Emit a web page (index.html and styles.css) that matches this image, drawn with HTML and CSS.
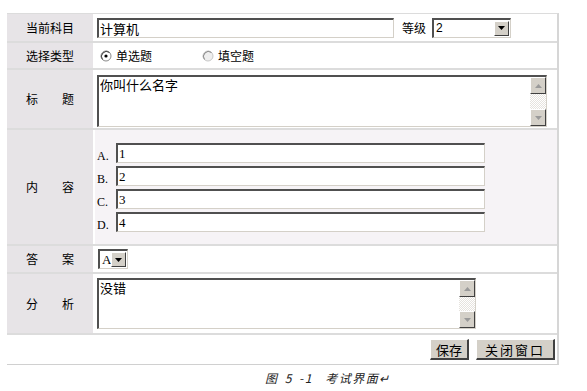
FILE: index.html
```html
<!DOCTYPE html>
<html lang="zh-CN">
<head>
<meta charset="utf-8">
<title>考试界面</title>
<link rel="stylesheet" href="styles.css">
</head>
<body>
<div class="form">
  <div class="row r1">
    <div class="label">当前科目</div>
    <div class="cell">
      <div class="field subject">计算机</div>
      <span class="level-label">等级</span>
      <div class="select level"><span class="sel-text">2</span><span class="drop"><svg width="7" height="4" viewBox="0 0 7 4"><path d="M0 0H7L3.5 4Z" fill="#000"/></svg></span></div>
    </div>
  </div>
  <div class="row r2">
    <div class="label">选择类型</div>
    <div class="cell">
      <span class="radio"><svg width="12" height="12" viewBox="0 0 12 12"><circle cx="6" cy="6" r="5" fill="#fff" stroke="#8a8a8a"/><path d="M2.5 9.5A5 5 0 0 1 9.5 2.5" fill="none" stroke="#404040"/><circle cx="6" cy="6" r="1.6" fill="#000"/></svg>单选题</span>
      <span class="radio second"><svg width="12" height="12" viewBox="0 0 12 12"><circle cx="6" cy="6" r="5" fill="#eee" stroke="#c8c8c8"/><path d="M2.5 9.5A5 5 0 0 1 9.5 2.5" fill="none" stroke="#888"/></svg>填空题</span>
    </div>
  </div>
  <div class="row r3">
    <div class="label">标　　题</div>
    <div class="cell top">
      <div class="area title-area">
        <div class="area-text">你叫什么名字</div>
        <div class="scroll">
          <span class="sbtn"><svg width="7" height="4" viewBox="0 0 7 4"><path d="M0 4H7L3.5 0Z" fill="#9a9a9a"/></svg></span>
          <span class="track"></span>
          <span class="sbtn"><svg width="7" height="4" viewBox="0 0 7 4"><path d="M0 0H7L3.5 4Z" fill="#9a9a9a"/></svg></span>
        </div>
      </div>
    </div>
  </div>
  <div class="row r4">
    <div class="label">内　　容</div>
    <div class="cell options">
      <div class="opt"><span class="letter">A.</span><div class="field choice">1</div></div>
      <div class="opt"><span class="letter">B.</span><div class="field choice">2</div></div>
      <div class="opt"><span class="letter">C.</span><div class="field choice">3</div></div>
      <div class="opt"><span class="letter">D.</span><div class="field choice">4</div></div>
    </div>
  </div>
  <div class="row r5">
    <div class="label">答　　案</div>
    <div class="cell">
      <div class="select answer"><span class="sel-text serif">A</span><span class="drop"><svg width="7" height="4" viewBox="0 0 7 4"><path d="M0 0H7L3.5 4Z" fill="#000"/></svg></span></div>
    </div>
  </div>
  <div class="row r6">
    <div class="label">分　　析</div>
    <div class="cell top">
      <div class="area note-area">
        <div class="area-text">没错</div>
        <div class="scroll">
          <span class="sbtn"><svg width="7" height="4" viewBox="0 0 7 4"><path d="M0 4H7L3.5 0Z" fill="#9a9a9a"/></svg></span>
          <span class="track"></span>
          <span class="sbtn"><svg width="7" height="4" viewBox="0 0 7 4"><path d="M0 0H7L3.5 4Z" fill="#9a9a9a"/></svg></span>
        </div>
      </div>
    </div>
  </div>
  <div class="actions">
    <button class="btn save">保存</button>
    <button class="btn close">关闭窗口</button>
  </div>
</div>
<p class="caption">图 5 -1&nbsp;&nbsp;考试界面↵</p>
</body>
</html>
```

FILE: styles.css
```css
* { box-sizing: border-box; }
body {
  margin: 0;
  background: #fff;
  font-family: "Noto Sans CJK SC", sans-serif;
  font-size: 12px;
  color: #000;
}
.form {
  margin: 13px 0 0 7px;
  width: 552px;
  border-top: 1px solid #dcdcdc;
  border-right: 2px solid #d6d6d6;
  border-bottom: 1px solid #d0d0d0;
}
.row {
  display: grid;
  grid-template-columns: 86px 1fr;
  column-gap: 2px;
  border-bottom: 2px solid #dcdcdc;
}
.r1 { height: 29px; }
.r2 { height: 27px; }
.r3 { height: 60px; }
.r4 { height: 116px; }
.r5 { height: 28px; }
.r6 { height: 61px; }
.label {
  background: #e7e4e7;
  display: flex;
  align-items: center;
  justify-content: center;
  line-height: 1;
}
.cell {
  display: flex;
  align-items: center;
  padding-left: 2px;
}
.cell.top { align-items: flex-start; padding-top: 4px; }
.field {
  height: 20px;
  background: #fff;
  border-top: 2px solid #505050;
  border-left: 2px solid #505050;
  border-right: 1px solid #d4d0c8;
  border-bottom: 1px solid #d4d0c8;
  padding-left: 1px;
  font-size: 13px;
  line-height: 17px;
}
.subject { width: 297px; }
.level-label { margin-left: 8px; margin-right: 6px; }
.select {
  height: 20px;
  display: flex;
  align-items: center;
  justify-content: space-between;
  background: #fff;
  border-top: 2px solid #505050;
  border-left: 2px solid #505050;
  border-right: 1px solid #d4d0c8;
  border-bottom: 1px solid #d4d0c8;
  padding: 0 1px 0 2px;
}
.level { width: 79px; }
.answer { width: 30px; margin-left: 1px; }
.sel-text { font-family: "Liberation Sans", sans-serif; font-size: 12px; line-height: 16px; }
.sel-text.serif { font-family: "Liberation Serif", serif; font-size: 13px; }
.drop {
  width: 15px;
  height: 15px;
  background: #d4d0c8;
  border-top: 1px solid #fff;
  border-left: 1px solid #fff;
  border-right: 1px solid #404040;
  border-bottom: 1px solid #404040;
  display: flex;
  align-items: center;
  justify-content: center;
}
.radio {
  display: inline-flex;
  align-items: center;
  gap: 4px;
  margin-left: 3px;
}
.radio.second { margin-left: 50px; }
.area {
  display: flex;
  background: #fff;
  border-top: 2px solid #505050;
  border-left: 2px solid #505050;
  border-right: 1px solid #d4d0c8;
  border-bottom: 1px solid #d4d0c8;
}
.title-area { width: 450px; height: 52px; margin-top: 1px; }
.note-area { width: 379px; height: 51px; }
.area-text {
  flex: 1;
  padding: 0 1px;
  font-size: 13px;
  line-height: 15px;
}
.scroll {
  width: 16px;
  display: flex;
  flex-direction: column;
}
.sbtn {
  height: 17px;
  background: #d4d0c8;
  border-top: 1px solid #fff;
  border-left: 1px solid #fff;
  border-right: 1px solid #404040;
  border-bottom: 1px solid #404040;
  display: flex;
  align-items: center;
  justify-content: center;
}
.track {
  flex: 1;
  background-color: #fff;
  background-image: repeating-conic-gradient(#e6e3de 0 25%, #fff 0 50%);
  background-size: 2px 2px;
}
.options {
  flex-direction: column;
  align-items: flex-start;
  justify-content: center;
  gap: 3px;
  padding-top: 1px;
}
.opt { display: flex; align-items: flex-end; }
.letter {
  width: 19px;
  font-family: "Liberation Serif", serif;
  font-size: 12px;
  line-height: 14px;
}
.choice {
  width: 369px;
  font-family: "Liberation Serif", serif;
  font-size: 13px;
}
.r4 .cell { background: #f6f3f6; }
.actions {
  height: 29px;
  display: flex;
  justify-content: flex-end;
  align-items: center;
  gap: 7px;
  padding-right: 2px;
}
.btn {
  height: 21px;
  margin: 0;
  padding: 0;
  background: #d4d0c8;
  border-top: 1px solid #fff;
  border-left: 1px solid #fff;
  border-right: 2px solid #404040;
  border-bottom: 2px solid #404040;
  font-family: "Noto Sans CJK SC", sans-serif;
  font-size: 13px;
  line-height: 17px;
  color: #000;
}
.save { width: 39px; }
.close { width: 79px; letter-spacing: 2px; }
.caption {
  margin: 4px 0 0;
  padding-left: 265px;
  font-style: italic;
  font-size: 12px;
  letter-spacing: 1.5px;
  word-spacing: 2px;
  color: #222;
}
```
